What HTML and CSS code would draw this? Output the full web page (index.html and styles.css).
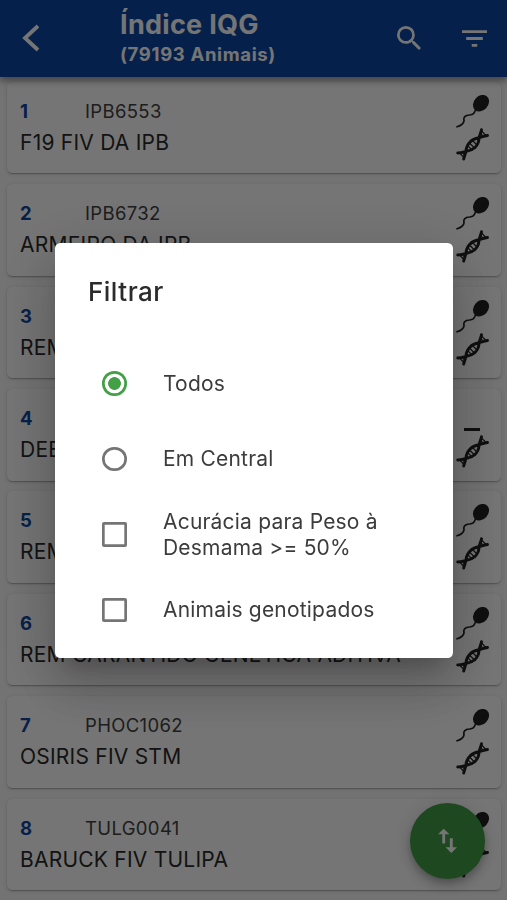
FILE: index.html
```html
<!DOCTYPE html>
<html lang="pt-BR">
<head>
<meta charset="utf-8">
<meta name="viewport" content="width=device-width">
<title>Índice IQG</title>
<link rel="stylesheet" href="styles.css">
</head>
<body>
<svg class="defs" aria-hidden="true">
  <symbol id="sperm" viewBox="0 0 33 33">
    <ellipse cx="25" cy="8.200" rx="9" ry="7.200" transform="rotate(-48 25 8.200)"/>
    <path d="M19.500 15C18 19 17 19.600 13.500 20C9 20.300 7.300 22 8 25.500C8.300 28.500 4 31 1 31.800" fill="none" stroke="currentColor" stroke-width="1.700" stroke-linecap="round"/>
  </symbol>
  <symbol id="dna" viewBox="0 0 33 33">
    <g fill="none" stroke="currentColor" stroke-linecap="round">
      <path stroke-width="2.900" d="M1.700 25C6 25 7.500 24 10.500 23.300C17.500 22 22.500 17.500 23 11C23.300 7 25 5 25.500 1.700M7.700 31C8.200 28 9.700 26 10 22.500C10.500 16 15.500 11 22.500 9.800C26 9 27.500 8 31.500 7.500"/>
      <path stroke-width="1.200" d="M4 25.500L7.500 29M6.500 24.800L9 27.300M12 18L16 22M13.500 15L19 20.500M16.500 12.500L21.500 17.500M24.500 5.500L27 8M25.500 3L30 7.500"/>
    </g>
  </symbol>
</svg>
<header class="bar">
  <svg class="back" viewBox="0 0 18 28"><path d="M16 2L3 14L16 26"/></svg>
  <div class="heading"><h1>Índice IQG</h1><p>(79193 Animais)</p></div>
  <svg class="search" viewBox="3 3 17.500 17.500"><path d="M15.500 14h-.79l-.28-.27A6.471 6.471 0 0 0 16 9.500 6.500 6.500 0 1 0 9.500 16c1.610 0 3.090-.59 4.230-1.570l.27.28v.79l5 4.990L20.490 19l-4.990-5zm-6 0C7.010 14 5 11.990 5 9.500S7.010 5 9.500 5 14 7.010 14 9.500 11.990 14 9.500 14z"/></svg>
  <svg class="filter" viewBox="3 6 18 12"><path d="M10 18h4v-2h-4v2zM3 6v2h18V6H3zm3 7h12v-2H6v2z"/></svg>
</header>
<main class="list">
  <article class="card"><div class="info"><div class="top"><b>1</b><span>IPB6553</span></div><h2>F19 FIV DA IPB</h2></div><div class="icons"><svg><use href="#sperm"/></svg><svg><use href="#dna"/></svg></div></article>
  <article class="card"><div class="info"><div class="top"><b>2</b><span>IPB6732</span></div><h2>ARMEIRO DA IPB</h2></div><div class="icons"><svg><use href="#sperm"/></svg><svg><use href="#dna"/></svg></div></article>
  <article class="card"><div class="info"><div class="top"><b>3</b></div><h2>REM</h2></div><div class="icons"><svg><use href="#sperm"/></svg><svg><use href="#dna"/></svg></div></article>
  <article class="card"><div class="info"><div class="top"><b>4</b></div><h2>DEE</h2></div><div class="icons"><div class="none"></div><svg><use href="#dna"/></svg></div></article>
  <article class="card"><div class="info"><div class="top"><b>5</b></div><h2>REM</h2></div><div class="icons"><svg><use href="#sperm"/></svg><svg><use href="#dna"/></svg></div></article>
  <article class="card"><div class="info"><div class="top"><b>6</b></div><h2>REM GARANTIDO GENETICA ADITIVA</h2></div><div class="icons"><svg><use href="#sperm"/></svg><svg><use href="#dna"/></svg></div></article>
  <article class="card"><div class="info"><div class="top"><b>7</b><span>PHOC1062</span></div><h2>OSIRIS FIV STM</h2></div><div class="icons"><svg><use href="#sperm"/></svg><svg><use href="#dna"/></svg></div></article>
  <article class="card"><div class="info"><div class="top"><b>8</b><span>TULG0041</span></div><h2>BARUCK FIV TULIPA</h2></div><div class="icons"><svg><use href="#sperm"/></svg><svg><use href="#dna"/></svg></div></article>
</main>
<button class="fab" aria-label="Ordenar"><svg viewBox="0 0 20 26"><path d="M4.500 15.500V6H0L6 0L12 6H7.500V15.500zM12.500 10h3V19.500H20L14 25.500L8 19.500H12.500z"/></svg></button>
<div class="scrim">
  <section class="dialog" role="dialog">
    <h3>Filtrar</h3>
    <div class="options">
      <label class="option"><i class="radio on"></i><span>Todos</span></label>
      <label class="option"><i class="radio"></i><span>Em Central</span></label>
      <label class="option"><i class="check"></i><span>Acurácia para Peso à Desmama &gt;= 50%</span></label>
      <label class="option"><i class="check"></i><span>Animais genotipados</span></label>
    </div>
  </section>
</div>
</body>
</html>
```
FILE: styles.css
```css
* { box-sizing: border-box; margin: 0; padding: 0; }
html, body { height: 900px; overflow: hidden; }
body { background: #fafafa; color: #2b2b2b; font-family: Inter, "Liberation Sans", sans-serif; }
.defs { display: none; }

.bar { position: relative; height: 76.500px; display: flex; align-items: center; background: #0d47a1; color: #fff; padding: 0 20px 0 22px; box-shadow: 0 3px 6px rgba(0,0,0,.24), 0 5px 7px rgba(0,0,0,.14), 0 1px 13px rgba(0,0,0,.12); }
.back { width: 18px; height: 28px; fill: none; stroke: #fff; stroke-width: 3.800; }
.heading { flex: 1; margin-left: 80px; }
.heading h1 { font-size: 27px; line-height: 32px; font-weight: 650; letter-spacing: .3px; white-space: nowrap; }
.heading p { font-size: 18.500px; line-height: 26px; font-weight: 650; letter-spacing: .65px; margin-bottom: 1px; white-space: nowrap; }
.search { width: 24px; height: 24px; fill: #fff; margin-right: 41px; }
.filter { width: 25px; height: 17px; fill: #fff; }

.list { display: flex; flex-direction: column; gap: 10.800px; padding: 5.300px 6px 0 7px; }
.card { height: 91.600px; flex: none; display: flex; justify-content: space-between; background: #fff; border-radius: 5.400px; padding: 13px 12px 0 13px; box-shadow: 0 2px 1px -1px rgba(0,0,0,.16), 0 1px 2px rgba(0,0,0,.12), 0 1px 4px rgba(0,0,0,.1); }
.top { display: flex; height: 32px; align-items: center; font-size: 18.500px; }
.top b { width: 65px; color: #0d47a1; font-weight: 700; }
.top span { letter-spacing: .35px; color: #424242; }
.card h2 { font-size: 21px; line-height: 32px; font-weight: 400; letter-spacing: .23px; white-space: nowrap; }
.icons { width: 33px; color: #212121; fill: currentColor; }
.icons svg { display: block; width: 33px; height: 33px; }
.none { width: 16px; height: 3px; margin: 26px 0 4px 8px; background: #212121; }

.fab { position: fixed; left: 409.700px; top: 803px; width: 75.700px; height: 75.700px; border: 0; border-radius: 50%; display: grid; place-items: center; background: #43a047; box-shadow: 0 4px 7px -1px rgba(0,0,0,.2), 0 8px 13px rgba(0,0,0,.14), 0 1px 24px rgba(0,0,0,.12); }
.fab svg { width: 19px; height: 26px; fill: #fff; }

.scrim { position: fixed; inset: 0; background: rgba(0,0,0,.54); }
.dialog { position: absolute; left: 55px; top: 243px; width: 398px; height: 415px; background: #fff; border-radius: 5.400px; padding-top: 32px; box-shadow: 0 15px 20px -9px rgba(0,0,0,.2), 0 32px 51px 4px rgba(0,0,0,.14), 0 12px 62px 11px rgba(0,0,0,.12); }
.dialog h3 { padding-left: 33px; font-size: 26px; line-height: 34px; font-weight: 500; letter-spacing: .5px; }
.options { display: grid; grid-auto-rows: 75.500px; margin-top: 36.500px; }
.option { display: flex; align-items: center; padding-left: 47px; font-size: 21px; line-height: 26px; letter-spacing: .2px; color: #3c3c3c; }
.option span { width: 235px; margin: 1px 0 0 37px; }
.radio, .check { flex: none; width: 24.500px; height: 24.500px; margin-right: -.5px; box-shadow: inset 0 0 0 2.700px #757575; }
.radio { border-radius: 50%; }
.radio.on { box-shadow: inset 0 0 0 2.700px #43a047; background: radial-gradient(circle, #43a047 6px, transparent 6.700px); }
.check { border-radius: 2px; }
```
